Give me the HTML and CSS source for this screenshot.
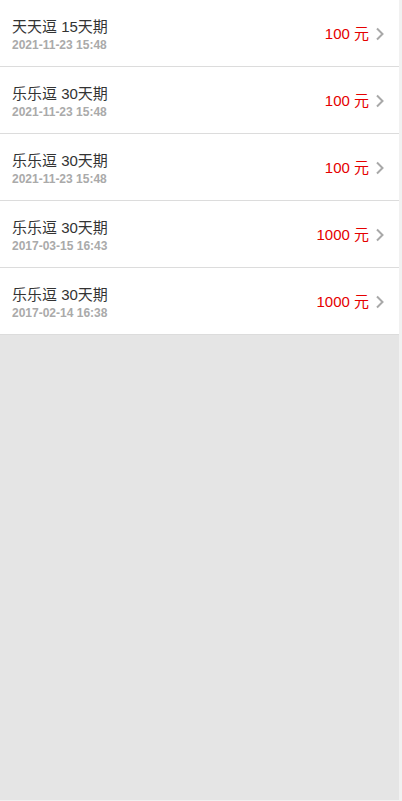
FILE: index.html
```html
<!DOCTYPE html>
<html lang="zh-CN">
<head>
    <meta charset="UTF-8">
    <meta name="viewport" content="width=device-width, initial-scale=1.0">
    <title>投资记录</title>
    <link rel="stylesheet" href="styles.css">
</head>
<body>
    <div class="page">
        <ul class="record-list">
            <li class="record">
                <div class="record-info">
                    <div class="record-name">天天逗 15天期</div>
                    <div class="record-time">2021-11-23 15:48</div>
                </div>
                <div class="record-amount">100 元</div>
                <svg class="arrow" width="10" height="14" viewBox="0 0 10 14"><path d="M2 1.5 L7.5 7 L2 12.5" fill="none" stroke="#a8a8a8" stroke-width="2"/></svg>
            </li>
            <li class="record">
                <div class="record-info">
                    <div class="record-name">乐乐逗 30天期</div>
                    <div class="record-time">2021-11-23 15:48</div>
                </div>
                <div class="record-amount">100 元</div>
                <svg class="arrow" width="10" height="14" viewBox="0 0 10 14"><path d="M2 1.5 L7.5 7 L2 12.5" fill="none" stroke="#a8a8a8" stroke-width="2"/></svg>
            </li>
            <li class="record">
                <div class="record-info">
                    <div class="record-name">乐乐逗 30天期</div>
                    <div class="record-time">2021-11-23 15:48</div>
                </div>
                <div class="record-amount">100 元</div>
                <svg class="arrow" width="10" height="14" viewBox="0 0 10 14"><path d="M2 1.5 L7.5 7 L2 12.5" fill="none" stroke="#a8a8a8" stroke-width="2"/></svg>
            </li>
            <li class="record">
                <div class="record-info">
                    <div class="record-name">乐乐逗 30天期</div>
                    <div class="record-time">2017-03-15 16:43</div>
                </div>
                <div class="record-amount">1000 元</div>
                <svg class="arrow" width="10" height="14" viewBox="0 0 10 14"><path d="M2 1.5 L7.5 7 L2 12.5" fill="none" stroke="#a8a8a8" stroke-width="2"/></svg>
            </li>
            <li class="record">
                <div class="record-info">
                    <div class="record-name">乐乐逗 30天期</div>
                    <div class="record-time">2017-02-14 16:38</div>
                </div>
                <div class="record-amount">1000 元</div>
                <svg class="arrow" width="10" height="14" viewBox="0 0 10 14"><path d="M2 1.5 L7.5 7 L2 12.5" fill="none" stroke="#a8a8a8" stroke-width="2"/></svg>
            </li>
        </ul>
    </div>
</body>
</html>
```

FILE: styles.css
```css
html {
    background: #f1f1f1;
}
body {
    margin: 0;
    padding: 0;
    font-family: "Liberation Sans", Arial, "Noto Sans CJK SC", sans-serif;
    color: #333;
}
.page {
    width: 399px;
    height: 800px;
    background: #e5e5e5;
}
.record-list {
    list-style: none;
    margin: 0;
    padding: 0;
    background: #fff;
}
.record {
    display: flex;
    align-items: center;
    height: 66px;
    padding: 0 14px 0 12px;
    border-bottom: 1px solid #dcdcdc;
}
.record-info {
    flex: 1;
    padding-top: 3px;
}
.record-name {
    font-size: 15px;
    line-height: 20px;
}
.record-time {
    font-size: 12px;
    line-height: 16px;
    color: #aaa;
    font-weight: bold;
}
.record-amount {
    font-size: 15px;
    color: #e50000;
    margin-right: 6px;
    margin-bottom: 1px;
}
.arrow {
    display: block;
    margin-top: 1px;
}
```
